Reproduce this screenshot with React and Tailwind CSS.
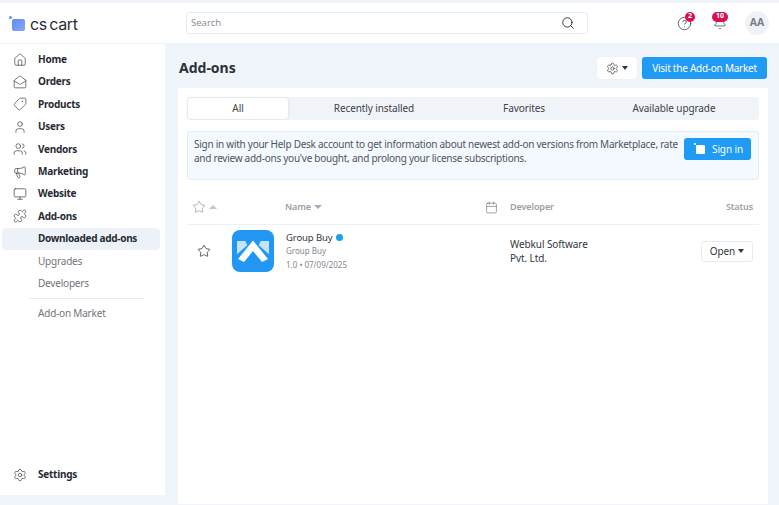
import React from "react";
import { Home, MailOpen, Tag, User, Users, Megaphone, Monitor, Puzzle, Settings, Search, Star, Calendar, Bell, CircleHelp } from "lucide-react";

const font = { fontFamily: '"Noto Sans", sans-serif' };

function NavItem({ icon: Icon, label, flip }) {
  return (
    <div className="flex h-[22.4px] items-center pl-[13px]">
      <Icon size={14} strokeWidth={1.2} className={"text-[#3c4049] shrink-0 " + (flip ? "-scale-x-100" : "")} />
      <span className="ml-[11px] text-[10px] font-bold tracking-[-0.25px] text-[#272b33]">{label}</span>
    </div>
  );
}

function Sub({ label }) {
  return <div className="flex h-[22.4px] items-center pl-[38px] text-[10px] tracking-[-0.2px] text-[#71757c]">{label}</div>;
}

function Caret({ className }) {
  return <span className={"inline-block h-0 w-0 border-x-[3px] border-t-[4px] border-x-transparent " + className} />;
}

function Logo() {
  return (
    <div className="flex items-center pl-[9px]">
      <div className="relative mt-[3px] ml-[3px] h-[12px] w-[13px] rounded-[2px] bg-gradient-to-br from-[#5b8df5] to-[#8aa4f8]">
        <span className="absolute -left-[3px] -top-[3px] h-[3px] w-[3px] rounded-full bg-[#5b8df5]" />
      </div>
      <span className="ml-[5px] mt-[2px] text-[16px] leading-none tracking-[-0.3px] [word-spacing:-2px] text-[#2a2e38]" style={{ fontFamily: '"Inter", sans-serif' }}>cs cart</span>
    </div>
  );
}

export default function App() {
  return (
    <div className="flex h-[505px] w-[779px] flex-col overflow-hidden bg-[#f0f4fb] pt-[3px]" style={font}>
      <header className="flex h-[40px] shrink-0 items-center bg-white">
        <div className="w-[186px] shrink-0"><Logo /></div>
        <div className="flex h-[22px] w-[402px] items-center justify-between rounded-[3px] border border-[#e9edf3] pl-[4px] pr-[12px]">
          <span className="pt-[1px] text-[9.5px] text-[#8c9098]">Search</span>
          <Search size={14} strokeWidth={1.5} className="text-[#1f2229]" />
        </div>
        <div className="relative ml-[89px] h-[15px] w-[15px]">
          <CircleHelp size={15} strokeWidth={1.2} className="text-[#33373f]" />
          <span className="absolute -right-[3px] -top-[4px] flex h-[10px] w-[10px] items-center justify-center rounded-full bg-[#d80f54] text-[7px] font-bold text-white">2</span>
        </div>
        <div className="relative ml-[21px] h-[15px] w-[15px]">
          <Bell size={14} strokeWidth={1.2} className="text-[#33373f]" />
          <span className="absolute -left-[1px] -top-[4px] flex h-[10px] w-[16px] items-center justify-center rounded-full bg-[#d80f54] text-[7px] font-bold text-white">10</span>
        </div>
        <div className="ml-[17px] flex h-[24px] w-[24px] items-center justify-center rounded-full bg-[#eff3f8] text-[10.5px] font-bold text-[#7a7e86]">AA</div>
      </header>
      <div className="mt-[1px] flex min-h-0 flex-1">
        <aside className="flex h-[451px] w-[165px] shrink-0 flex-col bg-white pt-[4.4px]">
          <NavItem icon={Home} label="Home" />
          <NavItem icon={MailOpen} label="Orders" />
          <NavItem icon={Tag} label="Products" flip />
          <NavItem icon={User} label="Users" />
          <NavItem icon={Users} label="Vendors" />
          <NavItem icon={Megaphone} label="Marketing" />
          <NavItem icon={Monitor} label="Website" />
          <NavItem icon={Puzzle} label="Add-ons" />
          <div className="ml-[2px] flex h-[22.4px] w-[158px] items-center rounded-[4px] bg-[#edf2f9] pl-[36px] text-[10px] font-bold tracking-[-0.3px] text-[#272b33]">Downloaded add-ons</div>
          <Sub label="Upgrades" />
          <Sub label="Developers" />
          <div className="ml-[29px] my-[3.5px] h-px w-[115px] bg-[#e6eaf1]" />
          <Sub label="Add-on Market" />
          <div className="mt-auto mb-[9px]"><NavItem icon={Settings} label="Settings" /></div>
        </aside>
        <main className="flex min-w-0 flex-1 flex-col pl-[12px] pr-[10px]">
          <div className="flex h-[43px] shrink-0 items-center justify-between pl-[2px] pr-[2px] pt-[5px]">
            <h1 className="mb-[2px] text-[14px] font-bold text-[#2c3038]">Add-ons</h1>
            <div className="flex items-center gap-[5px]">
              <div className="flex h-[22px] w-[40px] items-center justify-center gap-[3px] rounded-[3px] bg-white shadow-[0_0_1px_#d5dae2]">
                <Settings size={13} strokeWidth={1.3} className="text-[#33373f]" />
                <Caret className="border-t-[#33373f]" />
              </div>
              <div className="flex h-[22px] w-[125px] items-center justify-center rounded-[3px] bg-[#1f9bf5] text-[10px] tracking-[-0.25px] text-white">Visit the Add-on Market</div>
            </div>
          </div>
          <section className="flex-1 rounded-t-[3px] border border-[#f2f4f8] bg-white pl-[9px] pr-[9px] pt-[9px]">
            <div className="flex h-[23px] items-center rounded-[4px] bg-[#f0f3f8] pl-[1px] text-[10px] tracking-[-0.1px] text-[#3f434a]">
              <div className="flex h-[21px] w-[100px] items-center justify-center rounded-[3px] bg-white shadow-[0_0_2px_#c8ced8]">All</div>
              <div className="ml-[1px] w-[170px] text-center">Recently installed</div>
              <div className="w-[130px] text-center">Favorites</div>
              <div className="flex-1 text-center">Available upgrade</div>
            </div>
            <div className="mt-[11px] flex h-[49px] items-center justify-between rounded-[3px] border border-[#dfeef9] bg-[#f3f9fe] pl-[6px] pr-[7px]">
              <p className="w-[490px] pb-[9px] text-[10px] leading-[14px] tracking-[-0.26px] text-[#50555d]">Sign in with your Help Desk account to get information about newest add-on versions from Marketplace, rate and review add-ons you've bought, and prolong your license subscriptions.</p>
              <div className="mb-[13px] flex h-[22px] w-[67px] items-center gap-[7px] rounded-[3px] bg-[#1f9bf5] pl-[12px] text-[10px] tracking-[-0.1px] text-white">
                <span className="relative h-[9px] w-[9px] rounded-[1px] bg-white"><span className="absolute -left-[2px] -top-[2px] h-[2px] w-[2px] bg-white" /></span>
                Sign in
              </div>
            </div>
            <div className="flex h-[45px] items-center border-b border-[#edf0f4] pr-[6px] pt-[10px] text-[9px] font-semibold tracking-[-0.1px] text-[#9a9ea5]">
              <div className="flex w-[98px] items-center gap-[3px] pl-[5px]">
                <Star size={14} strokeWidth={1} className="text-[#7f838a]" />
                <span className="inline-block h-0 w-0 border-x-[4px] border-b-[4px] border-x-transparent border-b-[#c3c7cd]" />
              </div>
              <div className="flex w-[200px] items-center gap-[3px]">
                Name
                <span className="inline-block h-0 w-0 border-x-[4px] border-t-[4px] border-x-transparent border-t-[#aaaeb4]" />
              </div>
              <Calendar size={13} strokeWidth={1} className="text-[#555960]" />
              <div className="ml-[12px] flex-1">Developer</div>
              <div>Status</div>
            </div>
            <div className="flex h-[52px] items-center pr-[6px]">
              <div className="w-[45px] pl-[10px]"><Star size={14} strokeWidth={1.2} className="text-[#1c1f25]" /></div>
              <div className="h-[42px] w-[42px] rounded-[8px] bg-[#2197f3]">
                <svg width="42" height="42" viewBox="0 0 42 42" fill="none">
                  <path d="M5 11h8.3l2 4.3L5 24.3zM37 11h-8.3l-2 4.3L37 24.3z" fill="#c5e4fc" />
                  <path d="M21 10.5 36 29l-6 3-9-11-9 11-6-3z" fill="#fff" />
                </svg>
              </div>
              <div className="ml-[12px] w-[224px]">
                <div className="flex items-center gap-[3px] text-[9.5px] leading-[14px] tracking-[-0.1px] text-[#33373f]">Group Buy <span className="mb-[2px] h-[7px] w-[7px] rounded-full bg-[#16a0ee]" /></div>
                <div className="text-[8px] leading-[12px] text-[#85898f]">Group Buy</div>
                <div className="mt-[2px] text-[8px] leading-[12px] text-[#85898f]">1.0 • 07/09/2025</div>
              </div>
              <div className="w-[140px] text-[10px] leading-[14px] tracking-[-0.1px] text-[#33373f]">Webkul Software<br />Pvt. Ltd.</div>
              <div className="ml-auto flex h-[21px] w-[52px] items-center justify-center gap-[3px] rounded-[3px] border border-[#e8ebf0] text-[10px] tracking-[-0.1px] text-[#33373f]">
                Open <Caret className="border-t-[#33373f]" />
              </div>
            </div>
          </section>
        </main>
      </div>
    </div>
  );
}
